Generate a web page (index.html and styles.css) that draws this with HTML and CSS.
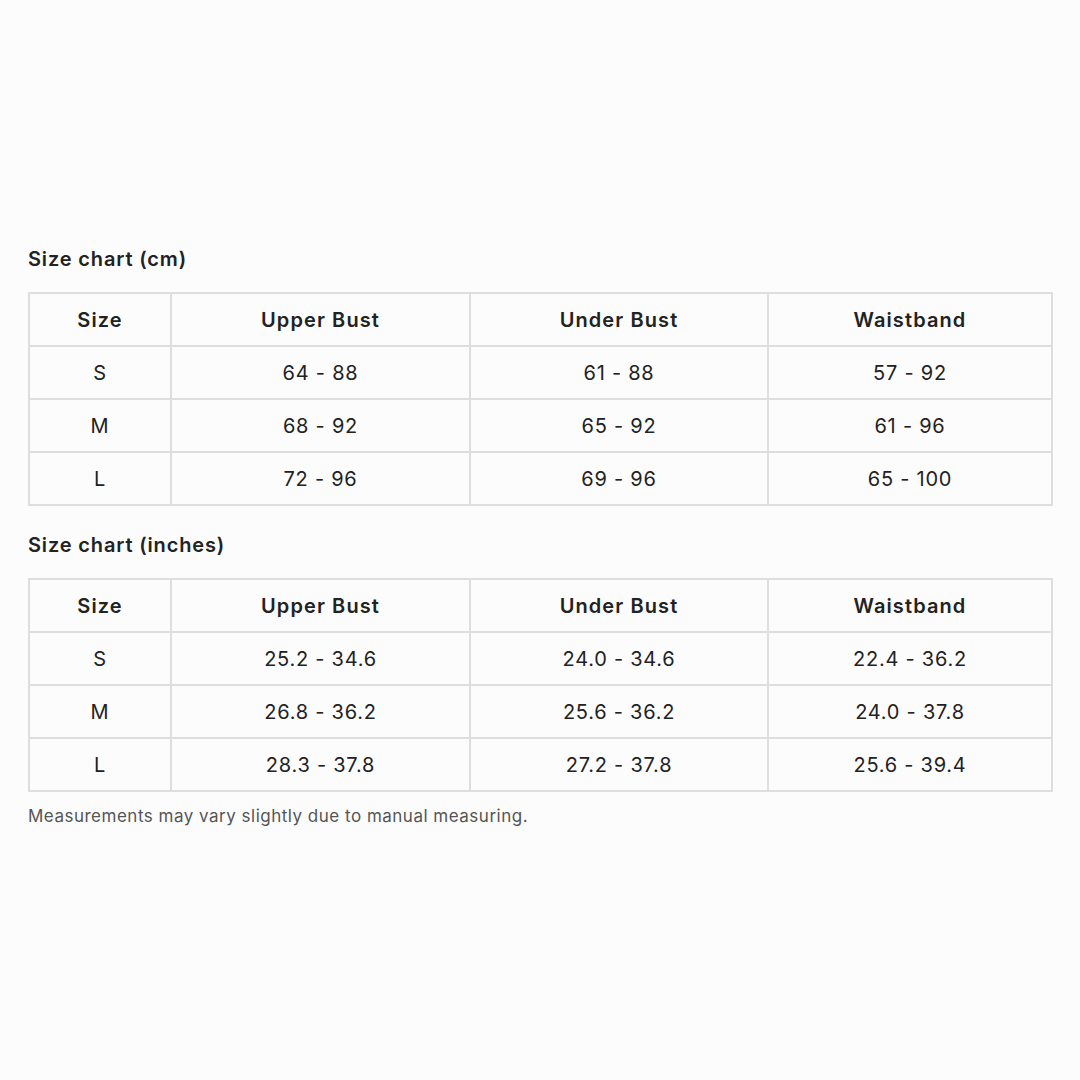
FILE: index.html
```html
<!DOCTYPE html>
<html>
<head>
<meta charset="utf-8">
<link rel="stylesheet" href="styles.css">
</head>
<body>
<main class="page">
  <h2 class="title">Size chart (cm)</h2>
  <table class="chart">
    <colgroup><col class="c1"><col class="c2"><col class="c3"><col class="c4"></colgroup>
    <thead><tr><th>Size</th><th>Upper Bust</th><th>Under Bust</th><th>Waistband</th></tr></thead>
    <tbody>
      <tr><td>S</td><td>64 - 88</td><td>61 - 88</td><td>57 - 92</td></tr>
      <tr><td>M</td><td>68 - 92</td><td>65 - 92</td><td>61 - 96</td></tr>
      <tr><td>L</td><td>72 - 96</td><td>69 - 96</td><td>65 - 100</td></tr>
    </tbody>
  </table>
  <h2 class="title">Size chart (inches)</h2>
  <table class="chart last">
    <colgroup><col class="c1"><col class="c2"><col class="c3"><col class="c4"></colgroup>
    <thead><tr><th>Size</th><th>Upper Bust</th><th>Under Bust</th><th>Waistband</th></tr></thead>
    <tbody>
      <tr><td>S</td><td>25.2 - 34.6</td><td>24.0 - 34.6</td><td>22.4 - 36.2</td></tr>
      <tr><td>M</td><td>26.8 - 36.2</td><td>25.6 - 36.2</td><td>24.0 - 37.8</td></tr>
      <tr><td>L</td><td>28.3 - 37.8</td><td>27.2 - 37.8</td><td>25.6 - 39.4</td></tr>
    </tbody>
  </table>
  <p class="note">Measurements may vary slightly due to manual measuring.</p>
</main>
</body>
</html>
```
FILE: styles.css
```css
html, body {
  margin: 0;
  padding: 0;
  background: #fcfcfc;
}
body {
  font-family: Inter, "Noto Sans", "Liberation Sans", sans-serif;
  color: #222;
}
.page {
  padding: 247px 28px 0 28px;
}
.title {
  margin: 0 0 21px 0;
  font-size: 20px;
  line-height: 24px;
  font-weight: 600;
  letter-spacing: 0.85px;
  color: #222;
}
.chart {
  width: 1023px;
  border-collapse: collapse;
  table-layout: fixed;
  margin: 0 0 27px 0;
  border: 2px solid #dedede;
}
.c1 { width: 142px; }
.c2 { width: 299px; }
.c3 { width: 298px; }
.c4 { width: 284px; }
.chart th, .chart td {
  border: 2px solid #dedede;
  height: 51px;
  padding: 0;
  text-align: center;
  font-size: 20px;
  line-height: 24px;
  color: #222;
}
.chart th { font-weight: 600; letter-spacing: 1.1px; }
.chart td { font-weight: 400; letter-spacing: 0.75px; }
.chart.last { margin-bottom: 14px; }
.note {
  margin: 0;
  font-size: 17px;
  line-height: 20px;
  letter-spacing: 0.5px;
  color: #555;
}
```
